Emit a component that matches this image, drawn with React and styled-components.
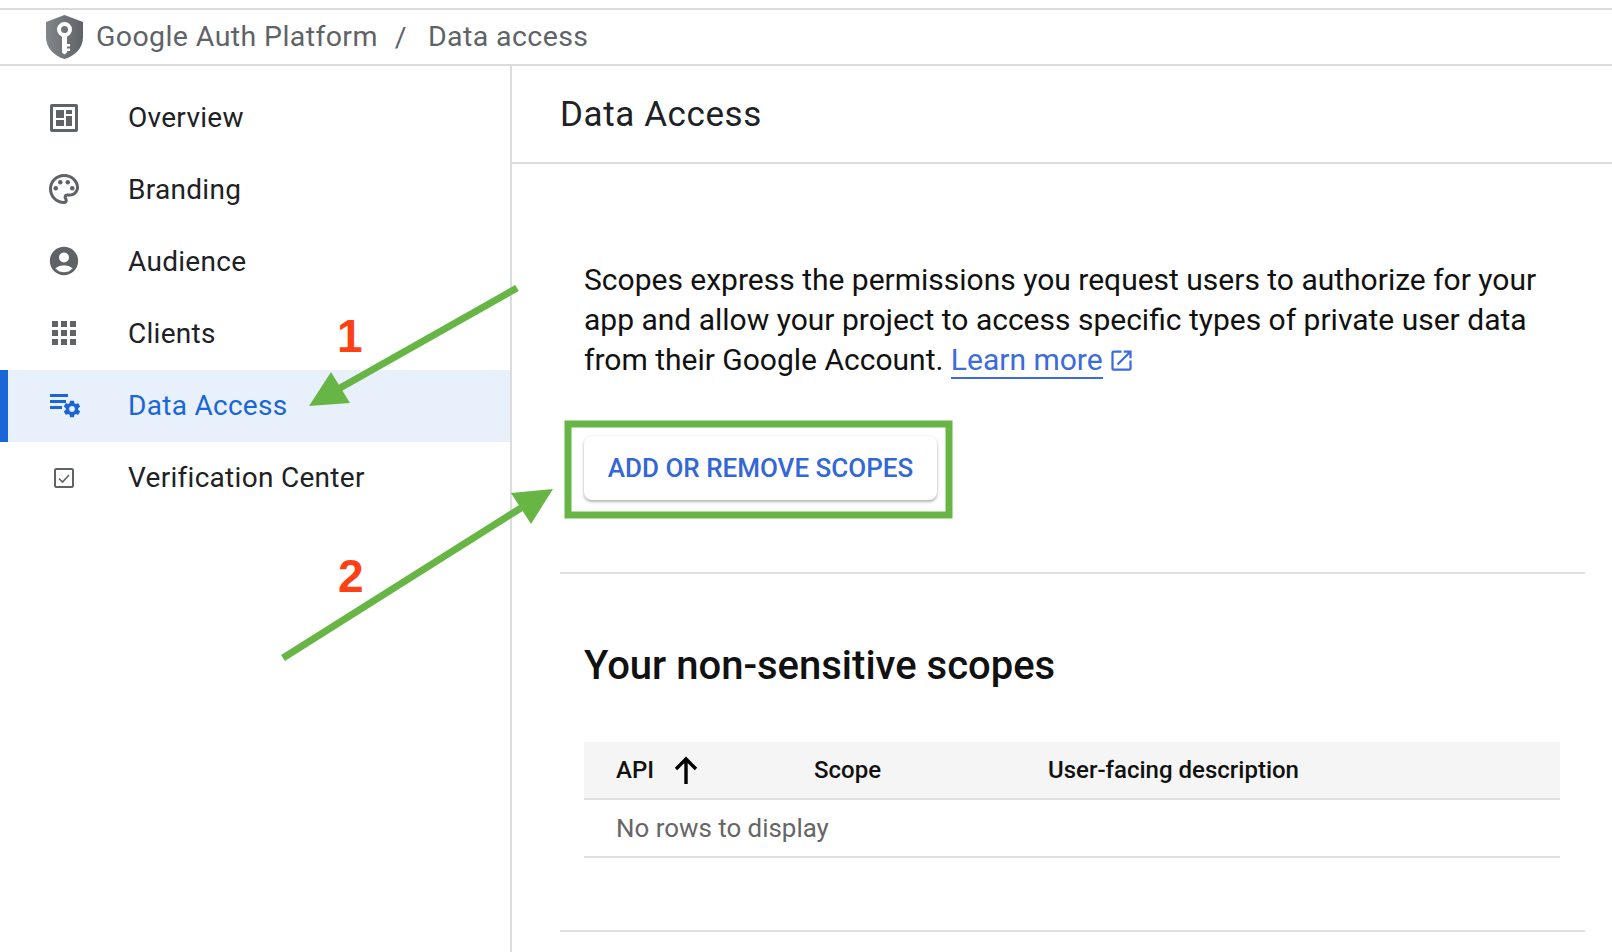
import styled, { createGlobalStyle } from 'styled-components';
import {
  MdOutlinePalette,
  MdAccountCircle,
  MdApps,
  MdOpenInNew,
} from 'react-icons/md';

const GEAR =
  'M19.43 12.98c.04-.32.07-.64.07-.98s-.03-.66-.07-.98l2.11-1.65c.19-.15.24-.42.12-.64l-2-3.46c-.12-.22-.39-.3-.61-.22l-2.49 1c-.52-.4-1.08-.73-1.69-.98l-.38-2.65C14.46 2.18 14.25 2 14 2h-4c-.25 0-.46.18-.49.42l-.38 2.65c-.61.25-1.17.59-1.69.98l-2.49-1c-.23-.09-.49 0-.61.22l-2 3.46c-.13.22-.07.49.12.64l2.11 1.65c-.04.32-.07.65-.07.98s.03.66.07.98l-2.11 1.65c-.19.15-.24.42-.12.64l2 3.46c.12.22.39.3.61.22l2.49-1c.52.4 1.08.73 1.69.98l.38 2.65c.03.24.24.42.49.42h4c.25 0 .46-.18.49-.42l.38-2.65c.61-.25 1.17-.59 1.69-.98l2.49 1c.23.09.49 0 .61-.22l2-3.46c.12-.22.07-.49-.12-.64l-2.11-1.65zM12 15.5c-1.93 0-3.5-1.57-3.5-3.5s1.57-3.5 3.5-3.5 3.5 1.57 3.5 3.5-1.57 3.5-3.5 3.5z';

const GlobalStyle = createGlobalStyle`
  html, body {
    margin: 0;
    padding: 0;
    background: #fff;
    overflow: hidden;
  }
  * {
    box-sizing: border-box;
  }
`;

const Page = styled.div`
  position: relative;
  width: 1612px;
  height: 952px;
  padding-top: 8px;
  overflow: hidden;
  font-family: Roboto, sans-serif;
`;

const Header = styled.header`
  display: flex;
  align-items: center;
  height: 58px;
  padding-left: 46px;
  border-top: 2px solid #dadce0;
  border-bottom: 2px solid #dadce0;
  font-family: Roboto, sans-serif;
  font-size: 28.5px;
  color: #5f6368;
  letter-spacing: 0.4px;

  svg {
    margin-right: 13px;
  }
`;

const HeaderText = styled.span`
  padding-bottom: 2px;
`;

const Slash = styled.span`
  margin: 0 21px 0 17px;
`;

const Body = styled.div`
  display: flex;
  height: 886px;
`;

const Sidebar = styled.nav`
  width: 512px;
  flex-shrink: 0;
  padding-top: 16px;
  border-right: 2px solid #dadce0;
`;

const NavRow = styled.a`
  display: flex;
  align-items: center;
  height: 72px;
  padding: 0 0 2px 50px;
  font-size: 28px;
  letter-spacing: 0.29px;
  color: ${(p) => (p.$active ? '#1a66d6' : '#202124')};
  background: ${(p) => (p.$active ? '#e8f0fc' : 'transparent')};
  box-shadow: ${(p) => (p.$active ? 'inset 8px 0 0 #1a66d6' : 'none')};
`;

const NavIcon = styled.span`
  display: flex;
  align-items: center;
  justify-content: center;
  width: 28px;
  margin-right: 50px;
  padding-top: ${(p) => (p.$lower ? '2px' : '0')};
  padding-left: ${(p) => (p.$active ? '2px' : '0')};
  color: ${(p) => (p.$active ? '#1a66d6' : '#5f6368')};

  svg {
    flex-shrink: 0;
  }
`;

const Main = styled.main`
  flex: 1;
  min-width: 0;
`;

const TitleBar = styled.div`
  display: flex;
  align-items: center;
  height: 98px;
  padding-left: 48px;
  border-bottom: 2px solid #dadce0;
  font-size: 35px;
  letter-spacing: 0.6px;
  color: #202124;
`;

const Content = styled.div`
  padding: 0 27px 0 48px;
`;

const Section = styled.section`
  padding: 96px 25px 72px 24px;
  border-bottom: 2px solid #e0e0e0;
`;

const Intro = styled.p`
  margin: 0 0 56px;
  font-size: 30px;
  line-height: 40px;
  color: #111;
`;

const LearnMore = styled.a`
  color: #3b6bdc;
  border-bottom: 2px solid #3b6bdc;
`;

const External = styled.span`
  display: inline-flex;
  margin-left: 5px;
  vertical-align: -4px;
  color: #3b6bdc;
`;

const ActionButton = styled.button`
  display: block;
  width: 353px;
  height: 64px;
  padding: 0;
  border: 0;
  border-radius: 8px;
  background: #fff;
  box-shadow: 0 2px 3px rgba(60, 64, 67, 0.38), 0 0 3px rgba(60, 64, 67, 0.08);
  font-family: Roboto, sans-serif;
  font-size: 26px;
  font-weight: 500;
  color: #3367d6;
`;

const TableSection = styled.section`
  padding: 67px 25px 72px 24px;
  border-bottom: 2px solid #e0e0e0;
`;

const Heading = styled.h2`
  margin: 0 0 51px;
  font-size: 40px;
  line-height: 50px;
  font-weight: 500;
  color: #111;
`;

const Table = styled.table`
  width: 100%;
  border-collapse: collapse;
  font-size: 24px;
`;

const HeadCell = styled.th`
  height: 57px;
  padding: 0 0 0 32px;
  background: #f5f5f5;
  border-bottom: 2px solid #e0e0e0;
  font-weight: 500;
  text-align: left;
  color: #111;
  width: ${(p) => p.$width};
`;

const SortLabel = styled.span`
  display: flex;
  align-items: center;
  height: 40px;

  svg {
    margin-left: 20px;
  }
`;

const EmptyCell = styled.td`
  height: 58px;
  padding: 0 0 0 32px;
  border-bottom: 2px solid #e0e0e0;
  font-size: 25.9px;
  color: #666;
`;

const Annotations = styled.svg`
  position: absolute;
  left: 0;
  top: 0;
  pointer-events: none;
`;

const StepNumber = styled.span`
  position: absolute;
  left: ${(p) => p.$left}px;
  top: ${(p) => p.$top}px;
  font-family: 'Liberation Sans', sans-serif;
  font-size: 46px;
  line-height: 1;
  font-weight: 700;
  color: #ff4015;
`;

const ShieldLogo = () => (
  <svg width="37" height="44" viewBox="0 0 37 44">
    <defs>
      <linearGradient id="shield" x1="0" x2="1" y1="0" y2="0">
        <stop offset="0" stopColor="#80868b" />
        <stop offset="1" stopColor="#5f6368" />
      </linearGradient>
    </defs>
    <path d="M18.5 0 37 7v15c0 11-8 19-18.5 22C8 41 0 33 0 22V7z" fill="url(#shield)" />
    <circle cx="18.5" cy="14.500" r="5.500" fill="none" stroke="#fff" strokeWidth="4" />
    <path fill="#fff" d="M16 20h5v9h3v2.500h-3v2h3v2.500h-3v1.500l-2.500 2-2.500-2z" />
  </svg>
);

const OverviewIcon = () => (
  <svg width="28" height="28" viewBox="0 0 28 28">
    <rect width="28" height="28" rx="2" fill="#5f6368" />
    <rect x="3" y="3" width="22" height="22" fill="#fff" />
    <path fill="#5f6368" d="M6 6h8v8H6zM16 6h6v4h-6zM6 16h8v6H6zM16 12h6v10h-6z" />
  </svg>
);

const DataAccessIcon = () => (
  <svg width="30" height="26" viewBox="0 0 30 26" fill="currentColor">
    <path d="M0 2h18v3H0zM0 8h16v3H0zM0 14h12v3H0z" />
    <svg x="12" y="7" width="20" height="20" viewBox="0 0 24 24">
      <path d={GEAR} />
    </svg>
  </svg>
);

const VerificationIcon = () => (
  <svg width="20" height="20" viewBox="0 0 20 20" fill="none" stroke="#5f6368">
    <rect x="1" y="1" width="18" height="18" rx="1.5" strokeWidth="2" />
    <path d="M5 10.5 8.500 14 15 7" strokeWidth="1.6" />
  </svg>
);

const SortArrow = () => (
  <svg width="24" height="28" viewBox="0 0 24 28" fill="none" stroke="#000" strokeWidth="3.4">
    <path d="M12 28V3M2 13 12 3l10 10" />
  </svg>
);

const navItems = [
  { label: 'Overview', icon: <OverviewIcon />, lower: true },
  { label: 'Branding', icon: <MdOutlinePalette size={36} /> },
  { label: 'Audience', icon: <MdAccountCircle size={34} /> },
  { label: 'Clients', icon: <MdApps size={36} /> },
  { label: 'Data Access', icon: <DataAccessIcon />, active: true },
  { label: 'Verification Center', icon: <VerificationIcon />, lower: true },
];

const App = () => {
  return (
    <>
      <GlobalStyle />
      <Page>
        <Header>
          <ShieldLogo />
          <HeaderText>Google Auth Platform</HeaderText>
          <Slash>/</Slash>
          <HeaderText>Data access</HeaderText>
        </Header>
        <Body>
          <Sidebar>
            {navItems.map((item) => (
              <NavRow key={item.label} $active={item.active}>
                <NavIcon $active={item.active} $lower={item.lower}>{item.icon}</NavIcon>
                {item.label}
              </NavRow>
            ))}
          </Sidebar>
          <Main>
            <TitleBar>Data Access</TitleBar>
            <Content>
              <Section>
                <Intro>
                  Scopes express the permissions you request users to authorize
                  for your app and allow your project to access specific types
                  of private user data from their Google Account.{' '}
                  <LearnMore>Learn more</LearnMore>
                  <External>
                    <MdOpenInNew size={27} />
                  </External>
                </Intro>
                <ActionButton>ADD OR REMOVE SCOPES</ActionButton>
              </Section>
              <TableSection>
                <Heading>Your non-sensitive scopes</Heading>
                <Table>
                  <thead>
                    <tr>
                      <HeadCell $width="198px">
                        <SortLabel>
                          API
                          <SortArrow />
                        </SortLabel>
                      </HeadCell>
                      <HeadCell $width="234px">Scope</HeadCell>
                      <HeadCell>User-facing description</HeadCell>
                    </tr>
                  </thead>
                  <tbody>
                    <tr>
                      <EmptyCell colSpan={3}>No rows to display</EmptyCell>
                    </tr>
                  </tbody>
                </Table>
              </TableSection>
            </Content>
          </Main>
        </Body>
        <Annotations width="1612" height="952" viewBox="0 0 1612 952">
          <rect x="568" y="424" width="381" height="91" fill="none" stroke="#67b645" strokeWidth="7" />
          <path d="M517 288 340 388" stroke="#67b645" strokeWidth="7" />
          <path d="M309 406 331 372 350 403z" fill="#67b645" />
          <path d="M283 658 521 508" stroke="#67b645" strokeWidth="7" />
          <path d="M553 489 511 493 531 524z" fill="#67b645" />
        </Annotations>
        <StepNumber $left={337} $top={313}>1</StepNumber>
        <StepNumber $left={338} $top={553}>2</StepNumber>
      </Page>
    </>
  );
};

export default App;
